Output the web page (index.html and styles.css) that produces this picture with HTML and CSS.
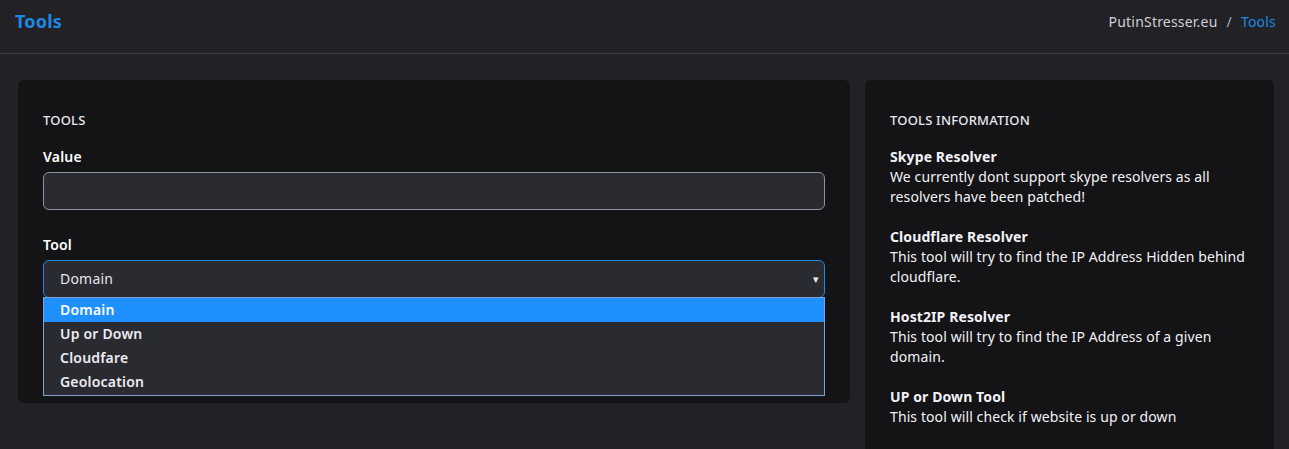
FILE: index.html
```html
<!DOCTYPE html>
<html>
<head>
<meta charset="utf-8">
<link rel="stylesheet" href="styles.css">
</head>
<body>
<header class="topbar">
  <h1 class="page-title">Tools</h1>
  <nav class="crumbs"><span class="crumb">PutinStresser.eu</span><span class="sep">/</span><span class="crumb-active">Tools</span></nav>
</header>
<main class="content">
  <section class="card card-main">
    <h2 class="card-title">TOOLS</h2>
    <div class="field">
      <label class="label">Value</label>
      <div class="input"></div>
    </div>
    <div class="field field-tool">
      <label class="label">Tool</label>
      <div class="select-wrap">
        <div class="select"><span>Domain</span><span class="caret">▾</span></div>
        <ul class="dropdown">
          <li class="opt opt-active">Domain</li>
          <li class="opt">Up or Down</li>
          <li class="opt">Cloudfare</li>
          <li class="opt">Geolocation</li>
        </ul>
      </div>
    </div>
  </section>
  <section class="card card-info">
    <h2 class="card-title">TOOLS INFORMATION</h2>
    <div class="info">
      <p class="info-item"><b>Skype Resolver</b><br>We currently dont support skype resolvers as all resolvers have been patched!</p>
      <p class="info-item"><b>Cloudflare Resolver</b><br>This tool will try to find the IP Address Hidden behind cloudflare.</p>
      <p class="info-item"><b>Host2IP Resolver</b><br>This tool will try to find the IP Address of a given domain.</p>
      <p class="info-item"><b>UP or Down Tool</b><br>This tool will check if website is up or down</p>
    </div>
  </section>
</main>
</body>
</html>
```
FILE: styles.css
```css
* { box-sizing: border-box; }
html, body { margin: 0; padding: 0; }
body {
  background: #212126;
  color: #fff;
  font-family: "Noto Sans", "Open Sans", sans-serif;
  font-size: 14px;
  line-height: 20px;
  letter-spacing: 0.2px;
  overflow: hidden;
  height: 449px;
}
.topbar {
  height: 54px;
  border-bottom: 1px solid #3a3a40;
  display: flex;
  align-items: flex-start;
  justify-content: space-between;
  padding: 10px 13px 0 15px;
}
.page-title {
  margin: 0;
  color: #1e88e5;
  font-size: 18px;
  font-weight: 700;
  line-height: 23px;
}
.crumbs {
  display: flex;
  gap: 9px;
  color: #d0d0d8;
  font-size: 14px;
  line-height: 24px;
}
.sep { color: #b0b0b8; }
.crumb-active { color: #1e88e5; }
.content {
  display: flex;
  gap: 15px;
  padding: 26px 15px 0 18px;
  align-items: flex-start;
}
.card {
  background: #141416;
  border-radius: 6px;
  padding: 30px 25px 25px;
}
.card-main { width: 832px; height: 323px; }
.card-info { flex: 1; height: 369px; border-radius: 6px 6px 0 0; }
.card-title {
  margin: 0 0 17px;
  font-size: 13px;
  font-weight: 500;
  line-height: 20px;
  color: #e8e8ee;
}
.field { display: flex; flex-direction: column; }
.label { font-weight: 600; font-size: 14px; line-height: 20px; margin-bottom: 5px; }
.input {
  height: 38px;
  background: #2a2a31;
  border: 1px solid #8a93a3;
  border-radius: 6px;
}
.field-tool { margin-top: 25px; }
.select-wrap { position: relative; }
.select {
  height: 38px;
  background: #2a2a31;
  border: 1px solid #1e88e5;
  border-radius: 6px;
  display: flex;
  align-items: center;
  justify-content: space-between;
  padding: 0 5px 0 16px;
  color: #e6e6ec;
}
.caret { font-size: 11px; color: #e6e6ec; }
.dropdown {
  position: absolute;
  top: 37px;
  left: 0;
  right: 0;
  margin: 0;
  padding: 0 0 1px;
  list-style: none;
  background: #2a2a31;
  border: 1px solid #7f9fd0;
  z-index: 2;
}
.opt {
  height: 24px;
  line-height: 24px;
  padding-left: 16px;
  font-weight: 600;
  color: #ececf2;
}
.opt-active { background: #1e90ff; color: #fff; }
.info-item { margin: 0 0 20px; color: #f2f2f6; letter-spacing: 0.1px; }
.info-item b { font-weight: 700; }
```
